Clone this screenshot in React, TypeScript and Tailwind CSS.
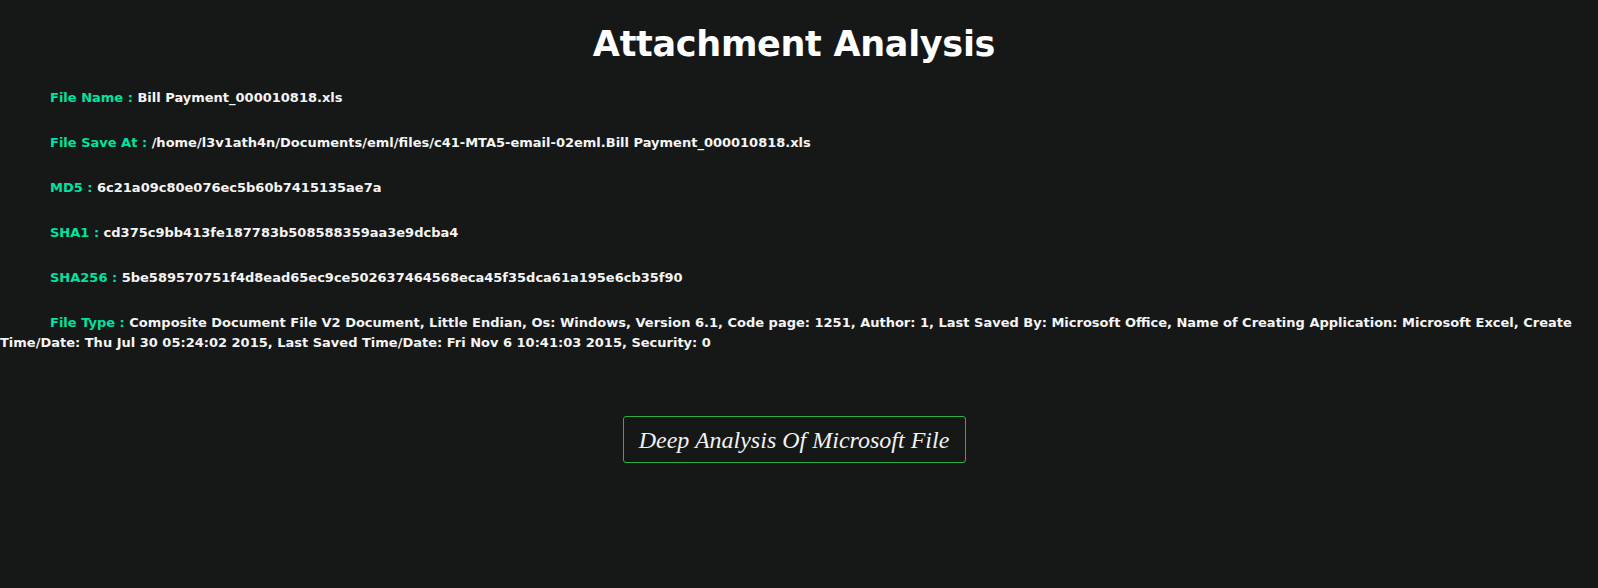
export default function App() {
  const rows: [string, string][] = [
    ["File Name : ", "Bill Payment_000010818.xls"],
    ["File Save At : ", "/home/l3v1ath4n/Documents/eml/files/c41-MTA5-email-02eml.Bill Payment_000010818.xls"],
    ["MD5 : ", "6c21a09c80e076ec5b60b7415135ae7a"],
    ["SHA1 : ", "cd375c9bb413fe187783b508588359aa3e9dcba4"],
    ["SHA256 : ", "5be589570751f4d8ead65ec9ce502637464568eca45f35dca61a195e6cb35f90"],
    [
      "File Type : ",
      "Composite Document File V2 Document, Little Endian, Os: Windows, Version 6.1, Code page: 1251, Author: 1, Last Saved By: Microsoft Office, Name of Creating Application: Microsoft Excel, Create Time/Date: Thu Jul 30 05:24:02 2015, Last Saved Time/Date: Fri Nov 6 10:41:03 2015, Security: 0",
    ],
  ];

  return (
    <div className="min-h-[588px] w-full bg-[#161818] text-white">
      <div className="w-[1588px]">
        <h1 className="pt-[21px] text-center font-['DejaVu_Sans',sans-serif] text-[35px] font-bold leading-[46px] tracking-[-0.3px]">
          Attachment Analysis
        </h1>
        <div className="mt-[21px] flex flex-col gap-[25px] font-['DejaVu_Sans',sans-serif] text-[13px] font-bold leading-[20px]">
          {rows.map(([label, value]) => (
            <p key={label} className="indent-[50px]">
              <span className="text-[#00e3a2]">{label}</span>
              <span className="text-[#f4f4f4]">{value}</span>
            </p>
          ))}
        </div>
        <div className="mt-[63px] flex justify-center">
          <button className="h-[47px] w-[343px] rounded-[3px] border border-[#2eb13f] font-['Liberation_Serif',serif] text-[24px] italic text-[#f2f2f2]">
            Deep Analysis Of Microsoft File
          </button>
        </div>
      </div>
    </div>
  );
}
